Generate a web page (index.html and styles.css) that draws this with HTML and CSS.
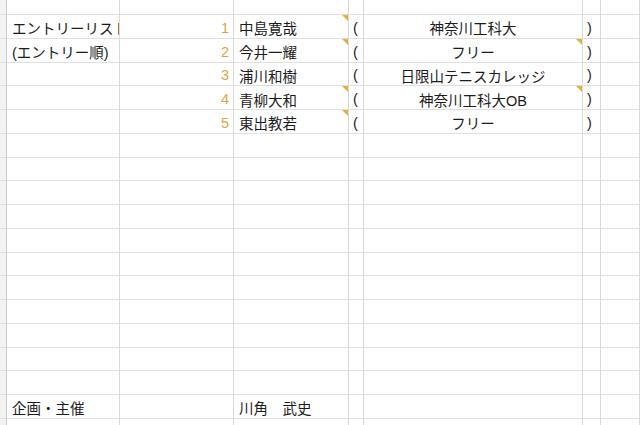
FILE: index.html
```html
<!DOCTYPE html>
<html lang="ja">
<head>
<meta charset="utf-8">
<link rel="stylesheet" href="styles.css">
</head>
<body>
<div class="sheet">
  <div class="c g"></div><div class="c"></div><div class="c"></div><div class="c"></div><div class="c"></div><div class="c"></div><div class="c"></div><div class="c"></div>

  <div class="c g"></div><div class="c lbl">エントリーリスト</div><div class="c num">1</div><div class="c name note">中島寛哉</div><div class="c par">(</div><div class="c org">神奈川工科大</div><div class="c par">)</div><div class="c"></div>
  <div class="c g"></div><div class="c lbl">(エントリー順)</div><div class="c num">2</div><div class="c name note">今井一耀</div><div class="c par">(</div><div class="c org note">フリー</div><div class="c par">)</div><div class="c"></div>
  <div class="c g"></div><div class="c lbl"></div><div class="c num">3</div><div class="c name">浦川和樹</div><div class="c par">(</div><div class="c org">日限山テニスカレッジ</div><div class="c par">)</div><div class="c"></div>
  <div class="c g"></div><div class="c lbl"></div><div class="c num">4</div><div class="c name note">青柳大和</div><div class="c par">(</div><div class="c org note">神奈川工科大OB</div><div class="c par">)</div><div class="c"></div>
  <div class="c g"></div><div class="c lbl"></div><div class="c num">5</div><div class="c name note">東出教若</div><div class="c par">(</div><div class="c org">フリー</div><div class="c par">)</div><div class="c"></div>

  <div class="c g"></div><div class="c"></div><div class="c"></div><div class="c"></div><div class="c"></div><div class="c"></div><div class="c"></div><div class="c"></div>
  <div class="c g"></div><div class="c"></div><div class="c"></div><div class="c"></div><div class="c"></div><div class="c"></div><div class="c"></div><div class="c"></div>
  <div class="c g"></div><div class="c"></div><div class="c"></div><div class="c"></div><div class="c"></div><div class="c"></div><div class="c"></div><div class="c"></div>
  <div class="c g"></div><div class="c"></div><div class="c"></div><div class="c"></div><div class="c"></div><div class="c"></div><div class="c"></div><div class="c"></div>
  <div class="c g"></div><div class="c"></div><div class="c"></div><div class="c"></div><div class="c"></div><div class="c"></div><div class="c"></div><div class="c"></div>
  <div class="c g"></div><div class="c"></div><div class="c"></div><div class="c"></div><div class="c"></div><div class="c"></div><div class="c"></div><div class="c"></div>
  <div class="c g"></div><div class="c"></div><div class="c"></div><div class="c"></div><div class="c"></div><div class="c"></div><div class="c"></div><div class="c"></div>
  <div class="c g"></div><div class="c"></div><div class="c"></div><div class="c"></div><div class="c"></div><div class="c"></div><div class="c"></div><div class="c"></div>
  <div class="c g"></div><div class="c"></div><div class="c"></div><div class="c"></div><div class="c"></div><div class="c"></div><div class="c"></div><div class="c"></div>
  <div class="c g"></div><div class="c"></div><div class="c"></div><div class="c"></div><div class="c"></div><div class="c"></div><div class="c"></div><div class="c"></div>
  <div class="c g"></div><div class="c"></div><div class="c"></div><div class="c"></div><div class="c"></div><div class="c"></div><div class="c"></div><div class="c"></div>

  <div class="c g"></div><div class="c lbl">企画・主催</div><div class="c"></div><div class="c name">川角　武史</div><div class="c"></div><div class="c"></div><div class="c"></div><div class="c"></div>
  <div class="c g"></div><div class="c"></div><div class="c"></div><div class="c"></div><div class="c"></div><div class="c"></div><div class="c"></div><div class="c"></div>
</div>
</body>
</html>
```

FILE: styles.css
```css
* { box-sizing: border-box; }
html, body { margin: 0; padding: 0; background: #fff; }
body {
  width: 640px;
  height: 425px;
  overflow: hidden;
  font-family: "Liberation Sans", "Noto Sans CJK JP", sans-serif;
  font-size: 14.5px;
  color: #1c1c1c;
}
.sheet {
  display: grid;
  grid-template-columns: 7px 113px 114px 115px 15px 219px 18px 39px;
  grid-template-rows: 15px repeat(17, 23.75px) 20px;
}
.c {
  position: relative;
  border-right: 1px solid #dadada;
  border-bottom: 1px solid #e0e0e0;
  display: flex;
  align-items: center;
  padding-top: 3px;
  white-space: nowrap;
  overflow: hidden;
  min-width: 0;
}
.g { background: #f3f3f3; border-right-color: #cccccc; }
.lbl { padding-left: 5px; }
.num { justify-content: flex-end; padding-right: 4px; color: #d9a648; }
.name { padding-left: 5px; }
.par { padding-left: 4px; }
.org { justify-content: center; }
.note::after {
  content: "";
  position: absolute;
  top: 0;
  right: 0;
  width: 0;
  height: 0;
  border-top: 6px solid #e6b040;
  border-left: 6px solid transparent;
}
```
